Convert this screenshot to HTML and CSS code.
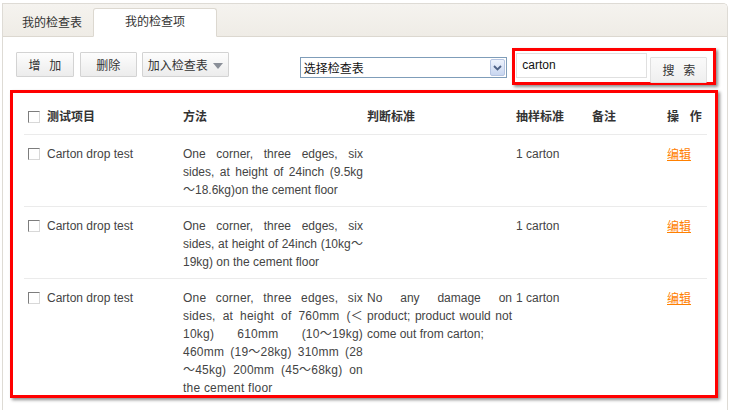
FILE: index.html
```html
<!DOCTYPE html>
<html lang="zh">
<head>
<meta charset="utf-8">
<title>我的检查项</title>
<link rel="stylesheet" href="styles.css">
</head>
<body>
<div class="frame">
  <div class="tabbar">
    <div class="tab">我的检查表</div>
    <div class="tab active">我的检查项</div>
  </div>
  <div class="content">
    <div class="toolbar">
      <button class="btn btn-add sp">增 加</button>
      <button class="btn btn-del">删除</button>
      <button class="btn btn-join">加入检查表 <span class="tri"></span></button>
      <div class="select">
        <span class="select-text">选择检查表</span>
        <span class="select-arrow"><svg width="9" height="6" viewBox="0 0 9 6"><path d="M1 1 L4.5 4.5 L8 1" fill="none" stroke="#4d6185" stroke-width="1.8"/></svg></span>
      </div>
      <div class="searchbox mark">
        <div class="search-input">carton</div>
        <button class="btn btn-search sp">搜 索</button>
      </div>
    </div>
    <div class="listbox mark">
      <table class="grid">
        <colgroup>
          <col class="c1"><col class="c2"><col class="c3"><col class="c4"><col class="c5"><col class="c6">
        </colgroup>
        <thead>
          <tr>
            <th><span class="cb"></span>测试项目</th>
            <th>方法</th>
            <th>判断标准</th>
            <th>抽样标准</th>
            <th>备注</th>
            <th class="sp">操 作</th>
          </tr>
        </thead>
        <tbody>
          <tr>
            <td><span class="cb"></span>Carton drop test</td>
            <td class="just" lang="en">One corner, three edges, six sides, at height of 24inch (9.5kg ～18.6kg)on the cement floor</td>
            <td></td>
            <td>1 carton</td>
            <td></td>
            <td><a class="edit" href="#">编辑</a></td>
          </tr>
          <tr>
            <td><span class="cb"></span>Carton drop test</td>
            <td class="just" lang="en">One corner, three edges, six sides, at height of 24inch (10kg～19kg) on the cement floor</td>
            <td></td>
            <td>1 carton</td>
            <td></td>
            <td><a class="edit" href="#">编辑</a></td>
          </tr>
          <tr>
            <td><span class="cb"></span>Carton drop test</td>
            <td class="just wide" lang="en">One corner, three edges, six sides, at height of 760mm (＜10kg) 610mm <span class="rng">(10～19kg)</span> 460mm <span class="rng">(19～28kg)</span> 310mm (28<span class="rng">～45kg)</span> 200mm <span class="rng">(45～68kg)</span> on the cement floor</td>
            <td class="just" lang="en">No any damage on product; product would not come out from carton;</td>
            <td>1 carton</td>
            <td></td>
            <td><a class="edit" href="#">编辑</a></td>
          </tr>
        </tbody>
      </table>
    </div>
  </div>
</div>
</body>
</html>
```

FILE: styles.css
```css
html, body {
  margin: 0;
  padding: 0;
  height: 410px;
  overflow: hidden;
  background: #fff;
}
body {
  font-family: "Liberation Sans", Arial, "Noto Sans CJK SC", sans-serif;
  font-size: 12px;
  color: #444;
}
.frame {
  margin: 3px 2px 0 2px;
  height: 407px;
  border: 1px solid #dedbd5;
  border-bottom: none;
  border-radius: 0 5px 0 0;
  box-sizing: border-box;
  overflow: hidden;
}
.tabbar {
  height: 33px;
  background: linear-gradient(#f5f3ef, #efece6);
  border-bottom: 1px solid #dcd8d0;
  display: flex;
  align-items: flex-end;
  padding-left: 5px;
  box-sizing: border-box;
}
.tab {
  font-family: "Noto Sans CJK SC", sans-serif;
  font-size: 12px;
  color: #333;
  height: 27px;
  line-height: 24px;
  padding: 0 14px;
  margin-bottom: -1px;
}
.tab.active {
  background: #fff;
  border: 1px solid #dcd8d0;
  border-bottom: 1px solid #fff;
  border-radius: 3px 3px 0 0;
  width: 122px;
  padding: 0;
  text-align: center;
  margin-left: -3px;
}
.content {
  padding: 0 9px 0 7px;
}
.toolbar {
  display: flex;
  align-items: flex-start;
  padding: 11px 2px 0 6px;
}
.btn {
  font-family: "Noto Sans CJK SC", sans-serif;
  font-size: 12px;
  color: #333;
  height: 25px;
  border: 1px solid #d3d3d3;
  border-radius: 1px;
  background: linear-gradient(#fdfdfd, #ececec);
  padding: 0;
  margin: 0;
  line-height: 22px;
}
.sp {
  word-spacing: 6px;
}
.btn-add { width: 58px; margin-top: 4px; }
.btn-del { width: 57px; margin: 4px 0 0 6px; }
.btn-join {
  width: 87px;
  margin: 4px 0 0 5px;
  text-align: left;
  padding-left: 5px;
  display: flex;
  align-items: center;
  gap: 5px;
}
.tri {
  width: 0;
  height: 0;
  border-left: 5px solid transparent;
  border-right: 5px solid transparent;
  border-top: 6px solid #8a8f98;
  margin-top: 2px;
}
.select {
  margin: 9px 0 0 71px;
  width: 208px;
  height: 21px;
  border: 1px solid #7f9db9;
  box-sizing: border-box;
  display: flex;
  align-items: center;
  justify-content: space-between;
  background: #fff;
}
.select-text {
  font-family: "Noto Sans CJK SC", sans-serif;
  font-size: 12px;
  color: #111;
  padding-left: 3px;
}
.select-arrow {
  width: 15px;
  height: 17px;
  margin-right: 1px;
  border: 1px solid #b6c5e2;
  box-sizing: border-box;
  border-radius: 2px;
  background: linear-gradient(#eef3fd, #c8d6f0);
  display: flex;
  align-items: center;
  justify-content: center;
}
.mark {
  border: 3px solid #f00;
  box-shadow: 2px 2px 3px rgba(0, 0, 0, 0.45);
  box-sizing: border-box;
}
.searchbox {
  margin-left: 5px;
  width: 204px;
  height: 37px;
  display: flex;
  align-items: flex-start;
  padding: 2px 0 0 1px;
}
.search-input {
  width: 131px;
  height: 25px;
  border: 1px solid #e0e0e0;
  box-sizing: border-box;
  font-size: 12px;
  color: #111;
  padding: 3px 0 0 5px;
  line-height: 16px;
}
.btn-search {
  width: 57px;
  height: 26px;
  margin: 4px 0 0 3px;
  border-color: #e0e0e0;
  background: linear-gradient(#fafafa, #efefef);
}
.listbox {
  margin-top: 5px;
  height: 308px;
  overflow: hidden;
  padding: 4px 8px 0 11px;
}
.grid {
  width: 683px;
  table-layout: fixed;
  border-collapse: collapse;
}
.c1 { width: 159px; }
.c2 { width: 184px; }
.c3 { width: 149px; }
.c4 { width: 76px; }
.c5 { width: 75px; }
.c6 { width: 40px; }
.grid th {
  font-family: "Noto Sans CJK SC", sans-serif;
  font-weight: bold;
  font-size: 12px;
  color: #333;
  text-align: left;
  height: 37px;
  padding: 0 3px 0 0;
  border-bottom: 1px solid #ebebeb;
  vertical-align: middle;
}
.grid th.sp {
  word-spacing: 8px;
}
.grid th:first-child,
.grid td:first-child {
  padding-left: 4px;
}
.grid td {
  vertical-align: top;
  line-height: 18px;
  padding: 10px 3px 7px 0;
  border-bottom: 1px solid #ebebeb;
  color: #444;
}
.grid td.just {
  text-align: justify;
  text-justify: inter-word;
  padding-right: 4px;
}
.grid td.wide {
  letter-spacing: 0.22px;
}
.rng {
  display: inline-block;
}
.cb {
  display: inline-block;
  width: 12px;
  height: 12px;
  box-sizing: border-box;
  border: 1px solid;
  border-color: #7d7d7d #d8d8d8 #d8d8d8 #7d7d7d;
  background: #fff;
  vertical-align: -2px;
  margin-right: 7px;
}
.edit {
  font-family: "Noto Sans CJK SC", sans-serif;
  color: #ff8000;
  text-decoration: underline;
}
```
